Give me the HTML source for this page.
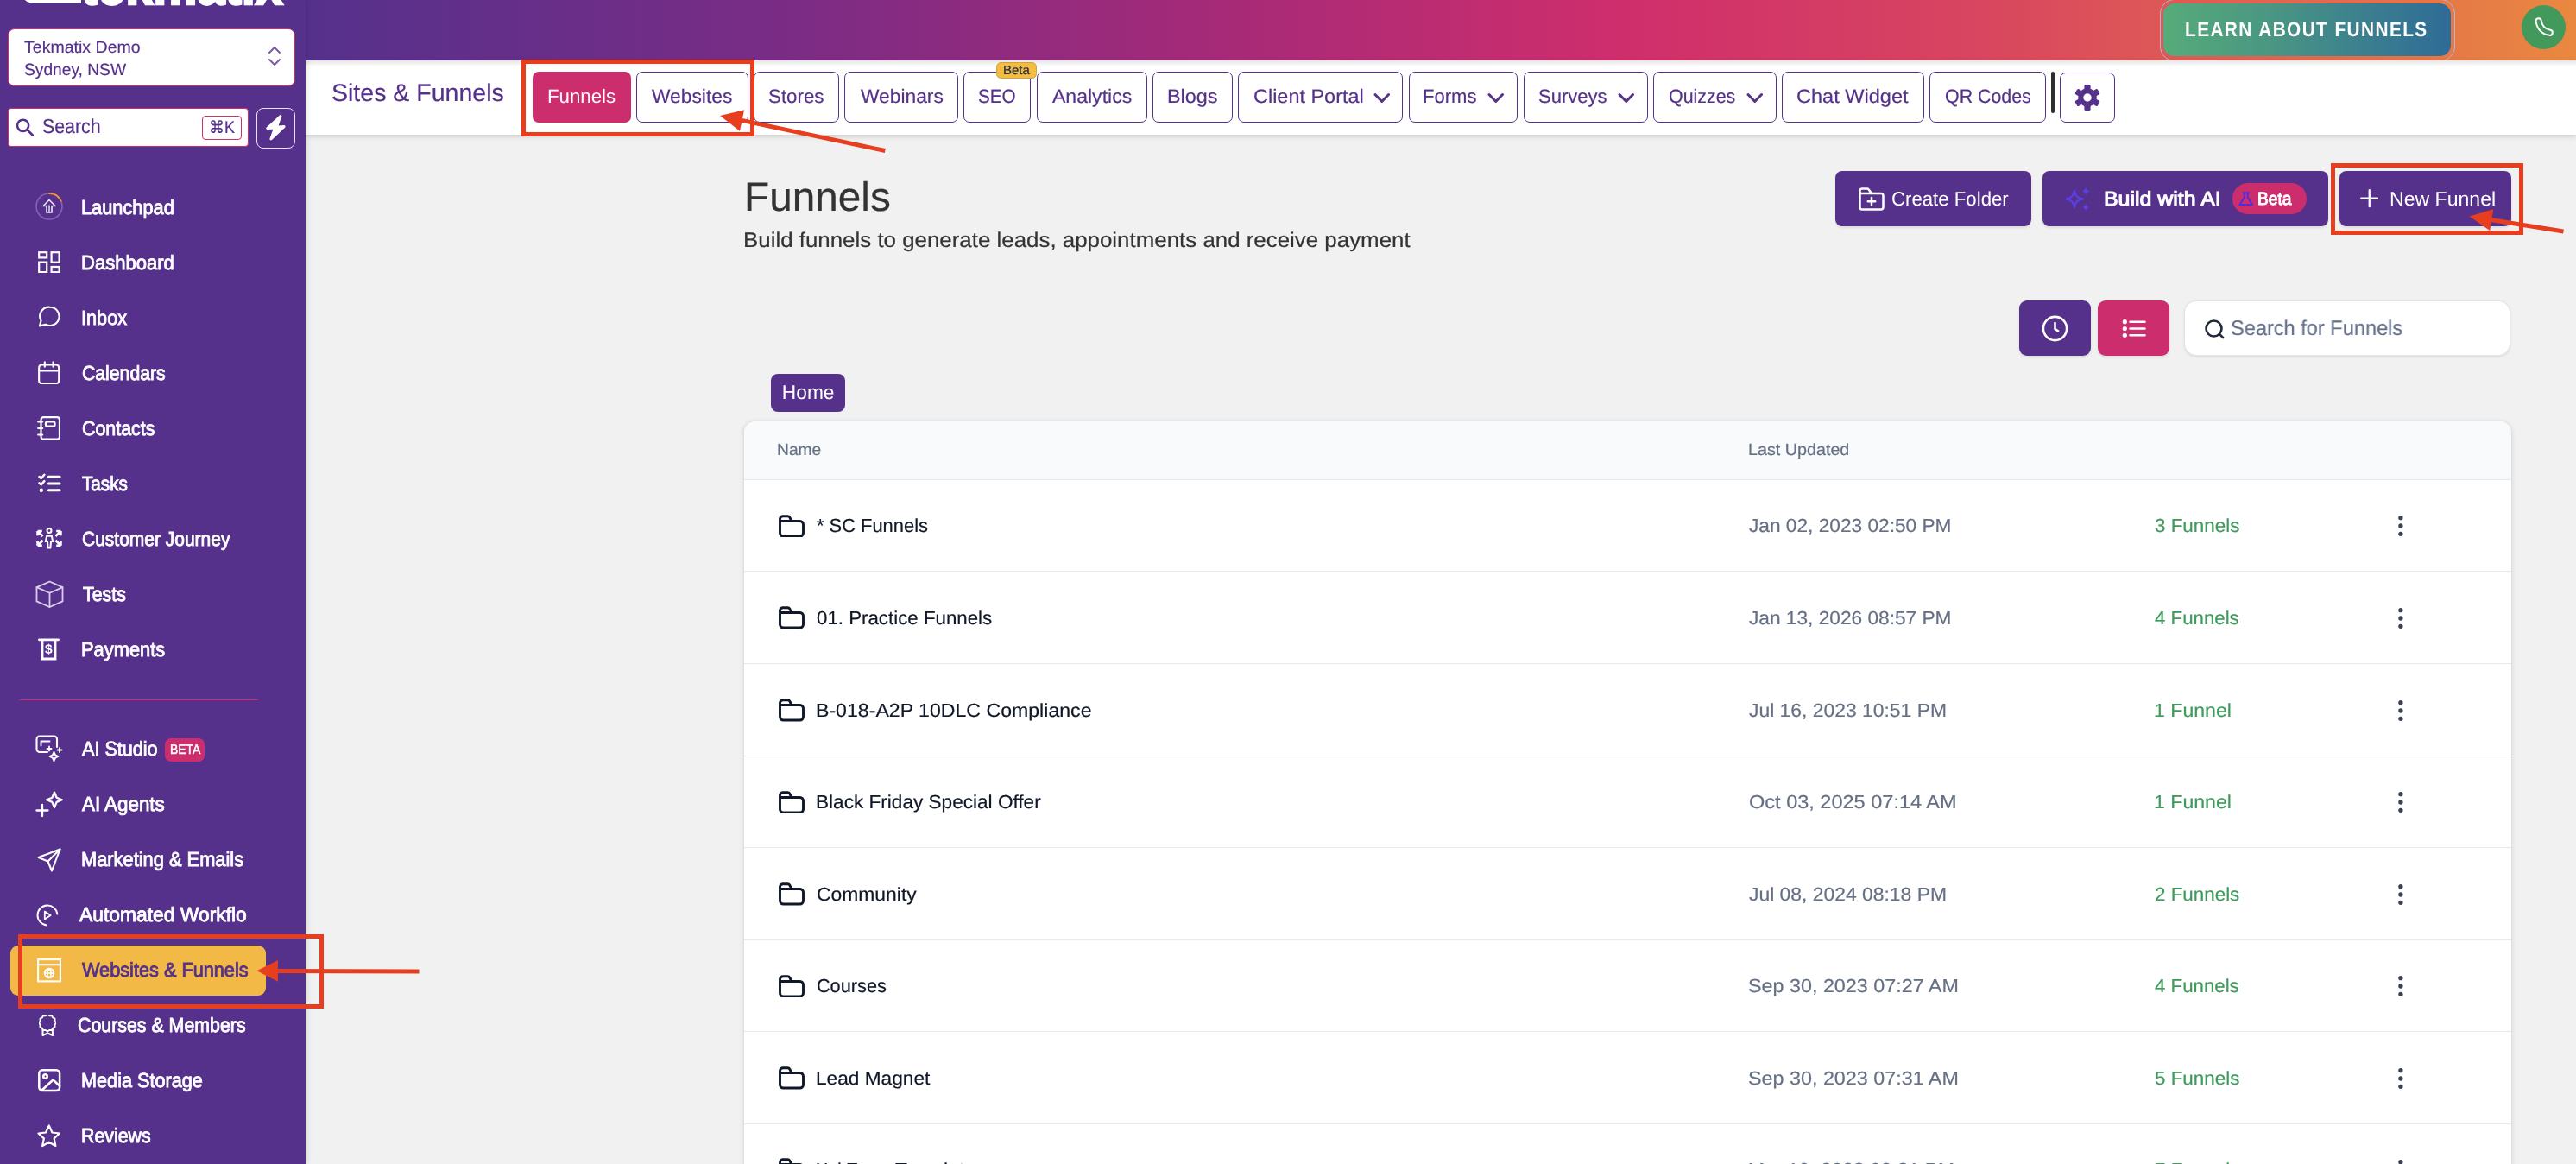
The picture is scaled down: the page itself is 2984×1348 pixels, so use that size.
<!DOCTYPE html>
<html lang="en">
<head>
<meta charset="utf-8">
<title>Funnels - Sites &amp; Funnels</title>
<style>
*{box-sizing:border-box;margin:0;padding:0}
html,body{width:2984px;height:1348px;overflow:hidden;background:#f1f1f1}
body{font-family:"Liberation Sans",Arial,sans-serif;-webkit-font-smoothing:antialiased;text-rendering:geometricPrecision}
#app{position:relative;width:2984px;height:1348px;overflow:hidden;will-change:transform}
.b{position:absolute;display:block}
.t{position:absolute;white-space:nowrap;transform-origin:0 50%;-webkit-text-stroke:.2px}

</style>
</head>
<body>
<div id="app">
<header>
<div class="b" style="left:354px;top:0px;width:2630px;height:70px;background:linear-gradient(90deg,#55318c 0%,#7a2c85 21%,#a52a78 40%,#cf2e6c 58%,#d8465f 74%,#e05d55 84%,#e98840 100%);"></div>
<div class="b" style="left:2501.5px;top:-1px;width:342.5px;height:72px;border-radius:17px;border:1.2px solid rgba(176,186,214,.95);"></div>
<div class="b" style="left:2505.8px;top:4px;width:333.4px;height:61.2px;border-radius:13px;background:linear-gradient(90deg,#56ab79 0%,#4a9683 38%,#3b7f8f 70%,#2f6b96 100%);"></div>
<div class="t" style="left:2531.40px;top:23px;font-size:23.5px;line-height:23.5px;color:#fff;font-weight:700;-webkit-text-stroke:0;letter-spacing:1.6px;transform:scaleX(0.8855);">LEARN ABOUT FUNNELS</div>
<div class="b" style="left:2921px;top:6px;width:51px;height:51px;background:#43995c;border-radius:26px;"></div>
<svg class="b" style="left:2921px;top:6px;" width="51" height="51" viewBox="0 0 51 51" fill="none" stroke="#fff" stroke-width="2" stroke-linecap="round" stroke-linejoin="round"><path d="M19.700 18.400Q21.400 29.900 32.700 31.800" stroke="#fff" stroke-width="8.200"/><path d="M19.700 18.400Q21.400 29.900 32.700 31.800" stroke="#43995c" stroke-width="4.200"/></svg>
</header>
<nav>
<div class="b" style="left:354px;top:70px;width:2630px;height:86px;background:#fff;box-shadow:0 2px 6px rgba(0,0,0,.16);"></div>
<div class="b" style="left:354px;top:70px;width:2630px;height:7px;background:linear-gradient(rgba(0,0,0,.10),rgba(0,0,0,0));"></div>
<div class="t" style="left:383.83px;top:93px;font-size:28.25px;line-height:28.25px;color:#55318c;transform:scaleX(1.0100);">Sites &amp; Funnels</div>
<div class="b" style="left:617px;top:83px;width:114px;height:59px;background:#cc2d6d;border-radius:7px;"></div>
<div class="t" style="left:633.97px;top:101px;font-size:22.25px;line-height:22.25px;color:#fff;-webkit-text-stroke:0;">Funnels</div>
<div class="b" style="left:737px;top:83px;width:129.75px;height:59px;background:#fff;border-radius:7px;border:1.5px solid #55318c;"></div>
<div class="t" style="left:755.46px;top:101px;font-size:22.25px;line-height:22.25px;color:#55318c;transform:scaleX(1.0243);">Websites</div>
<div class="b" style="left:873px;top:83px;width:98.75px;height:59px;background:#fff;border-radius:7px;border:1.5px solid #55318c;"></div>
<div class="t" style="left:889.96px;top:101px;font-size:22.25px;line-height:22.25px;color:#55318c;transform:scaleX(1.0034);">Stores</div>
<div class="b" style="left:978px;top:83px;width:131.75px;height:59px;background:#fff;border-radius:7px;border:1.5px solid #55318c;"></div>
<div class="t" style="left:996.71px;top:101px;font-size:22.25px;line-height:22.25px;color:#55318c;transform:scaleX(1.0239);">Webinars</div>
<div class="b" style="left:1116px;top:83px;width:77.75px;height:59px;background:#fff;border-radius:7px;border:1.5px solid #55318c;"></div>
<div class="t" style="left:1133.31px;top:101px;font-size:22.25px;line-height:22.25px;color:#55318c;transform:scaleX(0.9283);">SEO</div>
<div class="b" style="left:1201px;top:83px;width:127.75px;height:59px;background:#fff;border-radius:7px;border:1.5px solid #55318c;"></div>
<div class="t" style="left:1219.27px;top:101px;font-size:22.25px;line-height:22.25px;color:#55318c;transform:scaleX(1.0356);">Analytics</div>
<div class="b" style="left:1335px;top:83px;width:92.75px;height:59px;background:#fff;border-radius:7px;border:1.5px solid #55318c;"></div>
<div class="t" style="left:1351.88px;top:101px;font-size:22.25px;line-height:22.25px;color:#55318c;transform:scaleX(1.0512);">Blogs</div>
<div class="b" style="left:1434.25px;top:83px;width:190.5px;height:59px;background:#fff;border-radius:7px;border:1.5px solid #55318c;"></div>
<div class="t" style="left:1451.56px;top:101px;font-size:22.25px;line-height:22.25px;color:#55318c;transform:scaleX(1.0540);">Client Portal</div>
<svg class="b" style="left:1590.5px;top:107px;" width="19.5" height="13.5" viewBox="0 0 19.5 13.5" fill="none" stroke="#55318c" stroke-width="3" stroke-linecap="round" stroke-linejoin="round"><path d="M2 2.500l7.750 8 7.750-8"/></svg>
<div class="b" style="left:1632.25px;top:83px;width:125.5px;height:59px;background:#fff;border-radius:7px;border:1.5px solid #55318c;"></div>
<div class="t" style="left:1648.49px;top:101px;font-size:22.25px;line-height:22.25px;color:#55318c;transform:scaleX(0.9907);">Forms</div>
<svg class="b" style="left:1723.0px;top:107px;" width="19.5" height="13.5" viewBox="0 0 19.5 13.5" fill="none" stroke="#55318c" stroke-width="3" stroke-linecap="round" stroke-linejoin="round"><path d="M2 2.500l7.750 8 7.750-8"/></svg>
<div class="b" style="left:1765.25px;top:83px;width:143.5px;height:59px;background:#fff;border-radius:7px;border:1.5px solid #55318c;"></div>
<div class="t" style="left:1781.97px;top:101px;font-size:22.25px;line-height:22.25px;color:#55318c;transform:scaleX(0.9899);">Surveys</div>
<svg class="b" style="left:1874.0px;top:107px;" width="19.5" height="13.5" viewBox="0 0 19.5 13.5" fill="none" stroke="#55318c" stroke-width="3" stroke-linecap="round" stroke-linejoin="round"><path d="M2 2.500l7.750 8 7.750-8"/></svg>
<div class="b" style="left:1915.25px;top:83px;width:142.5px;height:59px;background:#fff;border-radius:7px;border:1.5px solid #55318c;"></div>
<div class="t" style="left:1933.00px;top:101px;font-size:22.25px;line-height:22.25px;color:#55318c;transform:scaleX(0.9612);">Quizzes</div>
<svg class="b" style="left:2022.5px;top:107px;" width="19.5" height="13.5" viewBox="0 0 19.5 13.5" fill="none" stroke="#55318c" stroke-width="3" stroke-linecap="round" stroke-linejoin="round"><path d="M2 2.500l7.750 8 7.750-8"/></svg>
<div class="b" style="left:2064.25px;top:83px;width:164.5px;height:59px;background:#fff;border-radius:7px;border:1.5px solid #55318c;"></div>
<div class="t" style="left:2081.30px;top:101px;font-size:22.25px;line-height:22.25px;color:#55318c;transform:scaleX(1.0584);">Chat Widget</div>
<div class="b" style="left:2235.25px;top:83px;width:134.5px;height:59px;background:#fff;border-radius:7px;border:1.5px solid #55318c;"></div>
<div class="t" style="left:2252.50px;top:101px;font-size:22.25px;line-height:22.25px;color:#55318c;transform:scaleX(0.9607);">QR Codes</div>
<div class="b" style="left:1154.25px;top:72px;width:46.5px;height:18.75px;background:#f4bc40;border-radius:5.5px;border:1px solid #cda43c;"></div>
<div class="t" style="left:1162.05px;top:75px;font-size:14.5px;line-height:14.5px;color:#1f2a44;transform:scaleX(1.0356);">Beta</div>
<div class="b" style="left:2376.2px;top:83px;width:4px;height:47.8px;background:#2e2e2e;border-radius:2px;"></div>
<div class="b" style="left:2386px;top:84px;width:64px;height:58px;background:#fff;border-radius:7px;border:1.5px solid #55318c;"></div>
<svg class="b" style="left:2403px;top:97.5px;" width="30" height="30" viewBox="0 0 30 30" fill="#55318c" stroke="none" stroke-width="0" stroke-linecap="round" stroke-linejoin="round"><g transform="translate(15 15)"><rect x="-3.6" y="-15" width="7.2" height="9" rx="1.6" transform="rotate(0)"/><rect x="-3.6" y="-15" width="7.2" height="9" rx="1.6" transform="rotate(60)"/><rect x="-3.6" y="-15" width="7.2" height="9" rx="1.6" transform="rotate(120)"/><rect x="-3.6" y="-15" width="7.2" height="9" rx="1.6" transform="rotate(180)"/><rect x="-3.6" y="-15" width="7.2" height="9" rx="1.6" transform="rotate(240)"/><rect x="-3.6" y="-15" width="7.2" height="9" rx="1.6" transform="rotate(300)"/><circle r="7.700" fill="none" stroke="#55318c" stroke-width="6"/></g></svg>
</nav>
<aside>
<div class="b" style="left:0px;top:0px;width:354px;height:1348px;background:#55318c;box-shadow:2px 0 6px rgba(0,0,0,.10);"></div>
<div class="t" style="left:94.21px;top:-49px;font-size:64px;line-height:64px;color:#fff;font-weight:700;-webkit-text-stroke:0;transform:scaleX(0.9007);-webkit-text-stroke:2.5px #fff;">tekmatix</div>
<svg class="b" style="left:28px;top:-0.8px;" width="70" height="6" viewBox="0 0 70 6" fill="#fff" stroke="none" stroke-width="0" stroke-linecap="round" stroke-linejoin="round"><path d="M0 0h66v5H14C7 5 2 3 0 0z"/></svg>
<div class="b" style="left:9px;top:33px;width:333px;height:66.5px;background:#fff;border-radius:8px;border:1.3px solid #cc2d6d;"></div>
<div class="t" style="left:28.34px;top:46px;font-size:19.25px;line-height:19.25px;color:#55318c;transform:scaleX(1.0156);">Tekmatix Demo</div>
<div class="t" style="left:27.60px;top:72px;font-size:19.25px;line-height:19.25px;color:#55318c;transform:scaleX(0.9966);">Sydney, NSW</div>
<svg class="b" style="left:309px;top:52px;" width="18" height="26" viewBox="0 0 16 26" fill="none" stroke="#7a5aa8" stroke-width="2" stroke-linecap="round" stroke-linejoin="round"><path d="M2 9l6-6 6 6M2 17l6 6 6-6"/></svg>
<div class="b" style="left:9px;top:125px;width:279px;height:44.5px;background:#fff;border-radius:4px;border:1.3px solid #cc2d6d;"></div>
<svg class="b" style="left:17px;top:135.5px;" width="24" height="24" viewBox="0 0 24 24" fill="none" stroke="#55318c" stroke-width="2.6" stroke-linecap="round" stroke-linejoin="round"><circle cx="9.6" cy="9.3" r="6.6"/><path d="M14.6 14.3L20.8 20.5"/></svg>
<div class="t" style="left:48.57px;top:135px;font-size:23px;line-height:23px;color:#55318c;transform:scaleX(0.9277);">Search</div>
<div class="b" style="left:234px;top:134px;width:46px;height:27.5px;background:#fff;border-radius:4px;border:1.5px solid #cc2d6d;"></div>
<div class="t" style="left:242.07px;top:139px;font-size:19.5px;line-height:19.5px;color:#55318c;transform:scaleX(0.9193);">⌘K</div>
<div class="b" style="left:297px;top:125px;width:45px;height:47px;background:#55318c;border-radius:8px;border:1.5px solid #e9e2f3;"></div>
<svg class="b" style="left:300px;top:125px;" width="40" height="46" viewBox="0 0 40 46" fill="#fff" stroke="#fff" stroke-width="3" stroke-linecap="round" stroke-linejoin="round"><path d="M24.900 9.600L9.700 23.500l8.800-.600-4.600 13 15.200-14.300-8.700.600z"/></svg>
<div class="t" style="left:93.94px;top:229px;font-size:23.25px;line-height:23.25px;color:#fff;-webkit-text-stroke:0;transform:scaleX(0.9369);-webkit-text-stroke:.85px;">Launchpad</div>
<div class="t" style="left:93.93px;top:293px;font-size:23.25px;line-height:23.25px;color:#fff;-webkit-text-stroke:0;transform:scaleX(0.9481);-webkit-text-stroke:.85px;">Dashboard</div>
<div class="t" style="left:93.69px;top:357px;font-size:23.25px;line-height:23.25px;color:#fff;-webkit-text-stroke:0;transform:scaleX(0.9335);-webkit-text-stroke:.85px;">Inbox</div>
<div class="t" style="left:94.56px;top:421px;font-size:23.25px;line-height:23.25px;color:#fff;-webkit-text-stroke:0;transform:scaleX(0.9122);-webkit-text-stroke:.85px;">Calendars</div>
<div class="t" style="left:94.55px;top:485px;font-size:23.25px;line-height:23.25px;color:#fff;-webkit-text-stroke:0;transform:scaleX(0.9207);-webkit-text-stroke:.85px;">Contacts</div>
<div class="t" style="left:95.23px;top:549px;font-size:23.25px;line-height:23.25px;color:#fff;-webkit-text-stroke:0;transform:scaleX(0.8907);-webkit-text-stroke:.85px;">Tasks</div>
<div class="t" style="left:94.57px;top:613px;font-size:23.25px;line-height:23.25px;color:#fff;-webkit-text-stroke:0;transform:scaleX(0.9023);-webkit-text-stroke:.85px;">Customer Journey</div>
<div class="t" style="left:96.13px;top:677px;font-size:23.25px;line-height:23.25px;color:#fff;-webkit-text-stroke:0;transform:scaleX(0.9177);-webkit-text-stroke:.85px;">Tests</div>
<div class="t" style="left:93.94px;top:741px;font-size:23.25px;line-height:23.25px;color:#fff;-webkit-text-stroke:0;transform:scaleX(0.9403);-webkit-text-stroke:.85px;">Payments</div>
<div class="b" style="left:22px;top:810px;width:277px;height:1.3px;background:#c62e6f;"></div>
<div class="b" style="left:12px;top:1094.5px;width:296px;height:58.5px;background:#f3b947;border-radius:9px;"></div>
<div class="t" style="left:95.22px;top:856px;font-size:23.25px;line-height:23.25px;color:#fff;-webkit-text-stroke:0;transform:scaleX(0.9285);-webkit-text-stroke:.85px;">AI Studio</div>
<div class="t" style="left:95.23px;top:920px;font-size:23.25px;line-height:23.25px;color:#fff;-webkit-text-stroke:0;transform:scaleX(0.9619);-webkit-text-stroke:.85px;">AI Agents</div>
<div class="t" style="left:93.64px;top:984px;font-size:23.25px;line-height:23.25px;color:#fff;-webkit-text-stroke:0;transform:scaleX(0.9392);-webkit-text-stroke:.85px;">Marketing &amp; Emails</div>
<div class="t" style="left:92.04px;top:1048px;font-size:23.25px;line-height:23.25px;color:#fff;-webkit-text-stroke:0;transform:scaleX(0.9824);-webkit-text-stroke:.85px;">Automated Workflo</div>
<div class="t" style="left:95.08px;top:1112px;font-size:23.25px;line-height:23.25px;color:#55318c;transform:scaleX(0.9335);-webkit-text-stroke:.85px;">Websites &amp; Funnels</div>
<div class="t" style="left:90.06px;top:1176px;font-size:23.25px;line-height:23.25px;color:#fff;-webkit-text-stroke:0;transform:scaleX(0.9184);-webkit-text-stroke:.85px;">Courses &amp; Members</div>
<div class="t" style="left:94.05px;top:1240px;font-size:23.25px;line-height:23.25px;color:#fff;-webkit-text-stroke:0;transform:scaleX(0.9318);-webkit-text-stroke:.85px;">Media Storage</div>
<div class="t" style="left:94.07px;top:1304px;font-size:23.25px;line-height:23.25px;color:#fff;-webkit-text-stroke:0;transform:scaleX(0.9181);-webkit-text-stroke:.85px;">Reviews</div>
<div class="b" style="left:191px;top:855px;width:46px;height:27px;background:#cc2d6d;border-radius:7px;"></div>
<div class="t" style="left:196.80px;top:861px;font-size:15.5px;line-height:15.5px;color:#fff;-webkit-text-stroke:0;transform:scaleX(0.8979);-webkit-text-stroke:.5px #fff;">BETA</div>
<svg class="b" style="left:41px;top:223px;" width="32" height="32" viewBox="0 0 32 32" fill="none" stroke="#fff" stroke-width="1.6" stroke-linecap="round" stroke-linejoin="round"><circle cx="16" cy="16" r="15" stroke="#8363b5" stroke-width="1.6"/><path d="M16 1a15 15 0 0 1 13.6 8.7" stroke="#f0923c" stroke-width="1.8"/><path d="M16 8.5l-7 7h4v7.5h6V15.5h4z" stroke="#e6dcf3" stroke-width="1.7"/><path d="M16 15v8" stroke="#e6dcf3" stroke-width="1.5"/></svg>
<svg class="b" style="left:44px;top:290.5px;stroke-linejoin:miter;" width="26" height="25.5" viewBox="0 0 26 25.5" fill="none" stroke="#fff" stroke-width="2.2" stroke-linecap="round" stroke-linejoin="round"><rect x="1.2" y="1.2" width="9" height="6.2"/><rect x="15.6" y="1.2" width="9" height="11.5"/><rect x="1.2" y="12.6" width="9" height="11.5"/><rect x="15.6" y="18" width="9" height="6.2"/></svg>
<svg class="b" style="left:43.8px;top:354px;" width="26" height="25.6" viewBox="0 0 27 26" fill="none" stroke="#fff" stroke-width="2.2" stroke-linecap="round" stroke-linejoin="round"><path d="M14.5 1.5a11 11 0 1 1-5.2 20.7L2 24l1.7-6.2A11 11 0 0 1 14.5 1.5z"/></svg>
<svg class="b" style="left:44px;top:417.7px;" width="25.4" height="27.8" viewBox="0 0 26 28" fill="none" stroke="#fff" stroke-width="2.2" stroke-linecap="round" stroke-linejoin="round"><rect x="1.2" y="4.2" width="23.6" height="22.5" rx="3.5"/><path d="M1.5 11.5h23M8 1.2v5.5M18 1.2v5.5"/></svg>
<svg class="b" style="left:42.5px;top:481.5px;" width="27.5" height="28" viewBox="0 0 27.5 28" fill="none" stroke="#fff" stroke-width="2.2" stroke-linecap="round" stroke-linejoin="round"><rect x="4.5" y="1.2" width="21.5" height="25.5" rx="3"/><rect x="10" y="6.5" width="10.5" height="5" rx="1.5"/><path d="M1.2 6.5h5M1.2 14h5M1.2 21.5h5"/></svg>
<svg class="b" style="left:44px;top:547.5px;" width="27" height="23" viewBox="0 0 27 23" fill="none" stroke="#fff" stroke-width="3" stroke-linecap="round" stroke-linejoin="round"><path d="M1.500 4l2.200 2 3.600-4.200M1.500 11.300l2.200 2 3.600-4.200" stroke-width="2.500"/><circle cx="3.800" cy="19.700" r="2.200" fill="#fff" stroke="none"/><path d="M12.300 4.300h12.800M12.300 11.900h12.800M12.300 19.700h12.800"/></svg>
<svg class="b" style="left:42px;top:610.5px;stroke-linejoin:miter;stroke-linecap:butt;" width="30" height="25" viewBox="0 0 30 25" fill="none" stroke="#fff" stroke-width="2.7" stroke-linecap="round" stroke-linejoin="round"><circle cx="15" cy="3.6" r="2.5" stroke-width="2"/><path d="M12.1 9.8h5.8l1.2 6.2h-2.1l-.6 7.4h-2.8l-.6-7.4h-2.1z" stroke-width="2"/><path d="M1.6 4h5.2M1.6 4v5.2M2 4.400l5.600 5.600M28.400 4h-5.200M28.400 4v5.200M28 4.400l-5.600 5.600M1.600 20.800h5.200M1.600 20.800v-5.200M2 20.400l5.600-5.600M28.400 20.800h-5.200M28.400 20.800v-5.200M28 20.400l-5.600-5.600"/></svg>
<svg class="b" style="left:40.5px;top:671.5px;" width="33" height="32.5" viewBox="0 0 33 32.5" fill="none" stroke="#dacfea" stroke-width="1.8" stroke-linecap="round" stroke-linejoin="round"><path d="M16.5 1.5l15 6.6v16.3l-15 6.6-15-6.6V8.1z"/><path d="M1.5 8.1l15 6.6 15-6.6M16.5 14.7V31"/></svg>
<svg class="b" style="left:44px;top:738.5px;stroke-linejoin:miter;" width="25" height="26" viewBox="0 0 25 26" fill="none" stroke="#fff" stroke-width="2.8" stroke-linecap="round" stroke-linejoin="round"><path d="M1.400 1.800h22.200M5 1.800v22.200h15v-22.200"/></svg>
<div class="t" style="left:51.90px;top:745px;font-size:15.5px;line-height:15.5px;color:#fff;font-weight:700;-webkit-text-stroke:0;">$</div>
<svg class="b" style="left:41px;top:851px;" width="32.5" height="32" viewBox="0 0 32.5 32" fill="none" stroke="#fff" stroke-width="2.1" stroke-linecap="round" stroke-linejoin="round"><path d="M25 14V5a3.5 3.5 0 0 0-3.5-3.500H5A3.500 3.500 0 0 0 1.500 5v11.500A3.500 3.500 0 0 0 5 20h9"/><path d="M6.500 7.500h10M6.500 7.500v5" stroke-width="1.9"/><path d="M16 13.500v5M13.500 16h5M28 15v5M25.500 17.500h5" stroke-width="1.800"/><path d="M21.500 20l1.600 3.400 3.400 1.600-3.400 1.600-1.600 3.400-1.600-3.400-3.400-1.600 3.400-1.600z" stroke-width="1.900"/></svg>
<svg class="b" style="left:41px;top:916px;" width="32" height="30.5" viewBox="0 0 32 30.5" fill="none" stroke="#fff" stroke-width="2.3" stroke-linecap="round" stroke-linejoin="round"><path d="M22 1.500l2.600 6.200 6.200 2.600-6.200 2.600-2.600 6.200-2.600-6.200-6.200-2.600 6.200-2.600z"/><path d="M8 16v13M1.500 22.500h13"/></svg>
<svg class="b" style="left:43px;top:981.5px;" width="28" height="28" viewBox="0 0 28 28" fill="none" stroke="#fff" stroke-width="2.1" stroke-linecap="round" stroke-linejoin="round"><path d="M26.500 1.500L1.500 11l11 4.500L17 26.500z"/><path d="M26.500 1.500L12.500 15.500"/></svg>
<svg class="b" style="left:42px;top:1046.5px;" width="26" height="26" viewBox="0 0 26 26" fill="none" stroke="#fff" stroke-width="1.9" stroke-linecap="round" stroke-linejoin="round"><path d="M24.400 11.600A11.500 11.500 0 1 0 12 24.460"/><path d="M9.800 8.600v8.800l6.800-4.400z" stroke-width="1.800"/></svg>
<svg class="b" style="left:43px;top:1110px;stroke-linejoin:miter;" width="28" height="27.5" viewBox="0 0 28 27.5" fill="none" stroke="#fff" stroke-width="2.1" stroke-linecap="round" stroke-linejoin="round"><rect x="1.100" y="1.100" width="25.800" height="25.300"/><path d="M1.100 7.200h25.800"/><circle cx="14" cy="17" r="5.300" stroke-width="1.800"/><path d="M8.700 17h10.600M14 11.700c-3 3-3 7.600 0 10.600M14 11.700c3 3 3 7.600 0 10.600" stroke-width="1.500"/></svg>
<svg class="b" style="left:44.5px;top:1174.5px;" width="20.5" height="25" viewBox="0 0 20.5 25" fill="none" stroke="#fff" stroke-width="2" stroke-linecap="round" stroke-linejoin="round"><path d="M10.200 1.200l2.300 1.500 2.700-.1 1.300 2.400 2.400 1.300-.1 2.700 1.500 2.300-1.500 2.300.1 2.700-2.400 1.300-1.300 2.400-2.700-.1-2.300 1.500-2.300-1.500-2.700.1-1.300-2.400-2.400-1.300.1-2.700L.200 11.300l1.500-2.300-.1-2.700 2.400-1.300 1.300-2.400 2.700.1z" transform="translate(0 -1.500) scale(.98)"/><path d="M4.500 17.500v6.500l5.700-2.500 5.700 2.500v-6.500"/></svg>
<svg class="b" style="left:44px;top:1238px;" width="26.5" height="26.5" viewBox="0 0 26.5 26.5" fill="none" stroke="#fff" stroke-width="2.5" stroke-linecap="round" stroke-linejoin="round"><rect x="1.300" y="1.300" width="23.800" height="23.800" rx="4"/><circle cx="8.500" cy="8.500" r="2.300"/><path d="M4.500 24.500L17.500 12.500l7.500 7"/></svg>
<svg class="b" style="left:43px;top:1301.5px;" width="27.5" height="27" viewBox="0 0 27.5 27" fill="none" stroke="#fff" stroke-width="2.2" stroke-linecap="round" stroke-linejoin="round"><path d="M13.750 1.500l3.700 8 8.500 1-6.300 5.900 1.700 8.600-7.600-4.300-7.600 4.300 1.700-8.600-6.300-5.900 8.500-1z"/></svg>
</aside>
<main>
<div class="t" style="left:861.76px;top:205px;font-size:47.25px;line-height:47.25px;color:#333;transform:scaleX(1.0100);">Funnels</div>
<div class="t" style="left:861.17px;top:267px;font-size:24.25px;line-height:24.25px;color:#333;transform:scaleX(1.0673);">Build funnels to generate leads, appointments and receive payment</div>
<div class="b" style="left:2126px;top:198px;width:227px;height:64px;background:#55318c;border-radius:8px;box-shadow:0 1.5px 3px rgba(0,0,0,.09);"></div>
<svg class="b" style="left:2153px;top:216.5px;" width="30" height="27" viewBox="0 0 30 27" fill="none" stroke="#fff" stroke-width="2.5" stroke-linecap="round" stroke-linejoin="round"><path d="M1.500 5.500v17.500a2.500 2.500 0 0 0 2.500 2.500h22a2.500 2.500 0 0 0 2.500-2.500V9.500a2.500 2.500 0 0 0-2.500-2.500H15l-3.300-4.600a2 2 0 0 0-1.600-.9H4a2.500 2.500 0 0 0-2.500 2.500zM1.500 7h13.500"/><path d="M15 12v8.500M10.750 16.250h8.500"/></svg>
<div class="t" style="left:2190.85px;top:219px;font-size:22.75px;line-height:22.75px;color:#fff;-webkit-text-stroke:0;transform:scaleX(0.9759);">Create Folder</div>
<div class="b" style="left:2366px;top:198px;width:331.25px;height:64px;background:#55318c;border-radius:8px;box-shadow:0 1.5px 3px rgba(0,0,0,.09);"></div>
<svg class="b" style="left:2393px;top:215.5px;" width="29" height="29" viewBox="0 0 29 29" fill="none" stroke="none" stroke-width="0" stroke-linecap="round" stroke-linejoin="round"><path d="M10 5.200c1 5.800 3.400 8.200 9.300 9.300-5.900 1.100-8.300 3.500-9.300 9.300-1-5.800-3.400-8.200-9.300-9.300 5.900-1.100 8.300-3.500 9.300-9.300z" fill="none" stroke="#5b3fe8" stroke-width="2.400"/><path d="M23.200 .300c.6 3.300 1.700 4.400 5 5-3.300.6-4.400 1.700-5 5-.6-3.300-1.700-4.400-5-5 3.300-.6 4.400-1.700 5-5zM23.200 19c.6 3.300 1.700 4.400 5 5-3.300.6-4.400 1.700-5 5-.6-3.300-1.700-4.400-5-5 3.300-.6 4.400-1.700 5-5z" fill="#5b3fe8" stroke="none"/></svg>
<div class="t" style="left:2436.82px;top:219px;font-size:23.25px;line-height:23.25px;color:#fff;-webkit-text-stroke:0;transform:scaleX(1.0712);-webkit-text-stroke:1px;">Build with AI</div>
<div class="b" style="left:2586.25px;top:212px;width:86px;height:36px;background:#cc2d6d;border-radius:18px;"></div>
<svg class="b" style="left:2592.5px;top:222px;" width="17.5" height="16.5" viewBox="0 0 17.5 16.5" fill="none" stroke="#4b2fe0" stroke-width="2" stroke-linecap="round" stroke-linejoin="round"><path d="M5.500 1.200h6.500M6.800 1.200v5.300L1.500 15h14.500L10.700 6.500V1.200"/></svg>
<div class="t" style="left:2614.73px;top:221px;font-size:20.75px;line-height:20.75px;color:#fff;-webkit-text-stroke:0;transform:scaleX(0.9233);-webkit-text-stroke:1px;">Beta</div>
<div class="b" style="left:2710px;top:198px;width:199.25px;height:64px;background:#55318c;border-radius:8px;box-shadow:0 1.5px 3px rgba(0,0,0,.09);"></div>
<svg class="b" style="left:2733.8px;top:219.3px;" width="21.5" height="21.5" viewBox="0 0 21.5 21.5" fill="none" stroke="#fff" stroke-width="2.3" stroke-linecap="round" stroke-linejoin="round"><path d="M10.750 1.200v19M1.200 10.750h19"/></svg>
<div class="t" style="left:2767.77px;top:219px;font-size:22.75px;line-height:22.75px;color:#fff;-webkit-text-stroke:0;transform:scaleX(1.0139);">New Funnel</div>
<div class="b" style="left:2339px;top:348px;width:83px;height:64px;background:#55318c;border-radius:9px;box-shadow:0 1.5px 3px rgba(0,0,0,.09);"></div>
<svg class="b" style="left:2365px;top:364.5px;" width="31" height="31" viewBox="0 0 31 31" fill="none" stroke="#fff" stroke-width="2.6" stroke-linecap="round" stroke-linejoin="round"><circle cx="15.500" cy="15.500" r="13.600"/><path d="M15.500 9v7l3.600 2.400"/></svg>
<div class="b" style="left:2430px;top:348px;width:83px;height:64px;background:#cc2d6d;border-radius:9px;box-shadow:0 1.5px 3px rgba(0,0,0,.09);"></div>
<svg class="b" style="left:2458px;top:368.5px;" width="28" height="23" viewBox="0 0 28 23" fill="none" stroke="#fff" stroke-width="2.6" stroke-linecap="round" stroke-linejoin="round"><circle cx="3.300" cy="3.700" r="2.600" fill="#fff" stroke="none"/><circle cx="3.300" cy="11.500" r="2.600" fill="#fff" stroke="none"/><circle cx="3.300" cy="19.300" r="2.600" fill="#fff" stroke="none"/><path d="M9.500 3.700h17M9.500 11.500h17M9.500 19.300h17"/></svg>
<div class="b" style="left:2529.6px;top:348.4px;width:378.8px;height:63.2px;background:#fff;border-radius:14px;border:1px solid #e2e4ea;box-shadow:0 1px 3px rgba(16,24,40,.10);"></div>
<svg class="b" style="left:2553.5px;top:369.5px;" width="23" height="23" viewBox="0 0 23 23" fill="none" stroke="#1f2a3d" stroke-width="2.6" stroke-linecap="round" stroke-linejoin="round"><circle cx="10.500" cy="10.500" r="9"/><path d="M17.200 17.200l4 4"/></svg>
<div class="t" style="left:2583.99px;top:369px;font-size:24.25px;line-height:24.25px;color:#64708a;transform:scaleX(0.9719);">Search for Funnels</div>
<div class="b" style="left:893px;top:433px;width:86px;height:44px;background:#55318c;border-radius:8px;"></div>
<div class="t" style="left:905.80px;top:443px;font-size:22.75px;line-height:22.75px;color:#fff;-webkit-text-stroke:0;">Home</div>
<div class="b" style="left:862px;top:488px;width:2046.5px;height:900px;background:#fff;border-radius:13px;box-shadow:0 1px 6px rgba(16,24,40,.14),0 0 2px rgba(16,24,40,.10);overflow:hidden"><div class="b" style="left:0;top:0;width:100%;height:67px;background:#f9fafb"></div></div>
<div class="t" style="left:900.46px;top:512px;font-size:19px;line-height:19px;color:#667085;transform:scaleX(1.0121);">Name</div>
<div class="t" style="left:2025.17px;top:512px;font-size:19px;line-height:19px;color:#667085;transform:scaleX(1.0380);">Last Updated</div>
<div class="b" style="left:862px;top:555px;width:2046.5px;height:1px;background:#e7e9ee;"></div>
<svg class="b" style="left:902px;top:595.7px;" width="30" height="26.5" viewBox="0 0 30 26.5" fill="none" stroke="#101828" stroke-width="2.9" stroke-linecap="round" stroke-linejoin="round"><path d="M1.500 5.200v16a3.800 3.800 0 0 0 3.800 3.800h19.400a3.800 3.800 0 0 0 3.800-3.800V11.300a3.800 3.800 0 0 0-3.800-3.800H15l-2.200-4.400a2.600 2.600 0 0 0-2.300-1.400H5a3.500 3.500 0 0 0-3.500 3.500zM1.500 7.500h13.500"/></svg>
<div class="t" style="left:946.38px;top:598px;font-size:21.75px;line-height:21.75px;color:#101828;transform:scaleX(1.0062);">* SC Funnels</div>
<div class="t" style="left:2026.20px;top:598px;font-size:21.75px;line-height:21.75px;color:#667085;transform:scaleX(1.0426);">Jan 02, 2023 02:50 PM</div>
<div class="t" style="left:2495.58px;top:598px;font-size:21.75px;line-height:21.75px;color:#3f9b5c;transform:scaleX(1.0300);">3 Funnels</div>
<svg class="b" style="left:2775px;top:594.2px;" width="12" height="30" viewBox="0 0 12 30" fill="#3a4153" stroke="none" stroke-width="0" stroke-linecap="round" stroke-linejoin="round"><circle cx="5.9" cy="5.650" r="2.650"/><circle cx="5.9" cy="15" r="2.650"/><circle cx="5.9" cy="24.350" r="2.650"/></svg>
<div class="b" style="left:862px;top:661px;width:2046.5px;height:1px;background:#e7e9ee;"></div>
<svg class="b" style="left:902px;top:702.2px;" width="30" height="26.5" viewBox="0 0 30 26.5" fill="none" stroke="#101828" stroke-width="2.9" stroke-linecap="round" stroke-linejoin="round"><path d="M1.500 5.200v16a3.800 3.800 0 0 0 3.800 3.800h19.400a3.800 3.800 0 0 0 3.800-3.800V11.300a3.800 3.800 0 0 0-3.800-3.800H15l-2.200-4.400a2.600 2.600 0 0 0-2.300-1.400H5a3.500 3.500 0 0 0-3.500 3.500zM1.500 7.500h13.500"/></svg>
<div class="t" style="left:946.03px;top:705px;font-size:21.75px;line-height:21.75px;color:#101828;transform:scaleX(1.0248);">01. Practice Funnels</div>
<div class="t" style="left:2026.20px;top:705px;font-size:21.75px;line-height:21.75px;color:#667085;transform:scaleX(1.0426);">Jan 13, 2026 08:57 PM</div>
<div class="t" style="left:2496.26px;top:705px;font-size:21.75px;line-height:21.75px;color:#3f9b5c;transform:scaleX(1.0229);">4 Funnels</div>
<svg class="b" style="left:2775px;top:700.7px;" width="12" height="30" viewBox="0 0 12 30" fill="#3a4153" stroke="none" stroke-width="0" stroke-linecap="round" stroke-linejoin="round"><circle cx="5.9" cy="5.650" r="2.650"/><circle cx="5.9" cy="15" r="2.650"/><circle cx="5.9" cy="24.350" r="2.650"/></svg>
<div class="b" style="left:862px;top:768px;width:2046.5px;height:1px;background:#e7e9ee;"></div>
<svg class="b" style="left:902px;top:809.2px;" width="30" height="26.5" viewBox="0 0 30 26.5" fill="none" stroke="#101828" stroke-width="2.9" stroke-linecap="round" stroke-linejoin="round"><path d="M1.500 5.200v16a3.800 3.800 0 0 0 3.800 3.800h19.400a3.800 3.800 0 0 0 3.800-3.800V11.300a3.800 3.800 0 0 0-3.800-3.800H15l-2.200-4.400a2.600 2.600 0 0 0-2.300-1.400H5a3.500 3.500 0 0 0-3.500 3.500zM1.500 7.500h13.500"/></svg>
<div class="t" style="left:945.16px;top:812px;font-size:21.75px;line-height:21.75px;color:#101828;transform:scaleX(1.0628);">B-018-A2P 10DLC Compliance</div>
<div class="t" style="left:2026.19px;top:812px;font-size:21.75px;line-height:21.75px;color:#667085;transform:scaleX(1.0519);">Jul 16, 2023 10:51 PM</div>
<div class="t" style="left:2495.04px;top:812px;font-size:21.75px;line-height:21.75px;color:#3f9b5c;transform:scaleX(1.0622);">1 Funnel</div>
<svg class="b" style="left:2775px;top:807.7px;" width="12" height="30" viewBox="0 0 12 30" fill="#3a4153" stroke="none" stroke-width="0" stroke-linecap="round" stroke-linejoin="round"><circle cx="5.9" cy="5.650" r="2.650"/><circle cx="5.9" cy="15" r="2.650"/><circle cx="5.9" cy="24.350" r="2.650"/></svg>
<div class="b" style="left:862px;top:875px;width:2046.5px;height:1px;background:#e7e9ee;"></div>
<svg class="b" style="left:902px;top:915.7px;" width="30" height="26.5" viewBox="0 0 30 26.5" fill="none" stroke="#101828" stroke-width="2.9" stroke-linecap="round" stroke-linejoin="round"><path d="M1.500 5.200v16a3.800 3.800 0 0 0 3.800 3.800h19.400a3.800 3.800 0 0 0 3.800-3.800V11.300a3.800 3.800 0 0 0-3.800-3.800H15l-2.200-4.400a2.600 2.600 0 0 0-2.300-1.400H5a3.500 3.500 0 0 0-3.500 3.500zM1.500 7.500h13.500"/></svg>
<div class="t" style="left:945.20px;top:918px;font-size:21.75px;line-height:21.75px;color:#101828;transform:scaleX(1.0385);">Black Friday Special Offer</div>
<div class="t" style="left:2025.63px;top:918px;font-size:21.75px;line-height:21.75px;color:#667085;transform:scaleX(1.0816);">Oct 03, 2025 07:14 AM</div>
<div class="t" style="left:2495.04px;top:918px;font-size:21.75px;line-height:21.75px;color:#3f9b5c;transform:scaleX(1.0622);">1 Funnel</div>
<svg class="b" style="left:2775px;top:914.2px;" width="12" height="30" viewBox="0 0 12 30" fill="#3a4153" stroke="none" stroke-width="0" stroke-linecap="round" stroke-linejoin="round"><circle cx="5.9" cy="5.650" r="2.650"/><circle cx="5.9" cy="15" r="2.650"/><circle cx="5.9" cy="24.350" r="2.650"/></svg>
<div class="b" style="left:862px;top:981px;width:2046.5px;height:1px;background:#e7e9ee;"></div>
<svg class="b" style="left:902px;top:1022.1999999999999px;" width="30" height="26.5" viewBox="0 0 30 26.5" fill="none" stroke="#101828" stroke-width="2.9" stroke-linecap="round" stroke-linejoin="round"><path d="M1.500 5.200v16a3.800 3.800 0 0 0 3.800 3.800h19.400a3.800 3.800 0 0 0 3.800-3.800V11.300a3.800 3.800 0 0 0-3.800-3.800H15l-2.200-4.400a2.600 2.600 0 0 0-2.300-1.400H5a3.500 3.500 0 0 0-3.500 3.500zM1.500 7.500h13.500"/></svg>
<div class="t" style="left:945.83px;top:1025px;font-size:21.75px;line-height:21.75px;color:#101828;transform:scaleX(1.0519);">Community</div>
<div class="t" style="left:2026.19px;top:1025px;font-size:21.75px;line-height:21.75px;color:#667085;transform:scaleX(1.0519);">Jul 08, 2024 08:18 PM</div>
<div class="t" style="left:2495.66px;top:1025px;font-size:21.75px;line-height:21.75px;color:#3f9b5c;transform:scaleX(1.0293);">2 Funnels</div>
<svg class="b" style="left:2775px;top:1020.6999999999999px;" width="12" height="30" viewBox="0 0 12 30" fill="#3a4153" stroke="none" stroke-width="0" stroke-linecap="round" stroke-linejoin="round"><circle cx="5.9" cy="5.650" r="2.650"/><circle cx="5.9" cy="15" r="2.650"/><circle cx="5.9" cy="24.350" r="2.650"/></svg>
<div class="b" style="left:862px;top:1088px;width:2046.5px;height:1px;background:#e7e9ee;"></div>
<svg class="b" style="left:902px;top:1128.6999999999998px;" width="30" height="26.5" viewBox="0 0 30 26.5" fill="none" stroke="#101828" stroke-width="2.9" stroke-linecap="round" stroke-linejoin="round"><path d="M1.500 5.200v16a3.800 3.800 0 0 0 3.800 3.800h19.400a3.800 3.800 0 0 0 3.800-3.800V11.300a3.800 3.800 0 0 0-3.800-3.800H15l-2.200-4.400a2.600 2.600 0 0 0-2.300-1.400H5a3.500 3.500 0 0 0-3.500 3.500zM1.500 7.500h13.500"/></svg>
<div class="t" style="left:945.89px;top:1131px;font-size:21.75px;line-height:21.75px;color:#101828;">Courses</div>
<div class="t" style="left:2025.28px;top:1131px;font-size:21.75px;line-height:21.75px;color:#667085;transform:scaleX(1.0725);">Sep 30, 2023 07:27 AM</div>
<div class="t" style="left:2496.26px;top:1131px;font-size:21.75px;line-height:21.75px;color:#3f9b5c;transform:scaleX(1.0229);">4 Funnels</div>
<svg class="b" style="left:2775px;top:1127.1999999999998px;" width="12" height="30" viewBox="0 0 12 30" fill="#3a4153" stroke="none" stroke-width="0" stroke-linecap="round" stroke-linejoin="round"><circle cx="5.9" cy="5.650" r="2.650"/><circle cx="5.9" cy="15" r="2.650"/><circle cx="5.9" cy="24.350" r="2.650"/></svg>
<div class="b" style="left:862px;top:1194px;width:2046.5px;height:1px;background:#e7e9ee;"></div>
<svg class="b" style="left:902px;top:1235.1999999999998px;" width="30" height="26.5" viewBox="0 0 30 26.5" fill="none" stroke="#101828" stroke-width="2.9" stroke-linecap="round" stroke-linejoin="round"><path d="M1.500 5.200v16a3.800 3.800 0 0 0 3.800 3.800h19.400a3.800 3.800 0 0 0 3.800-3.800V11.300a3.800 3.800 0 0 0-3.800-3.800H15l-2.200-4.400a2.600 2.600 0 0 0-2.300-1.400H5a3.500 3.500 0 0 0-3.500 3.500zM1.500 7.500h13.500"/></svg>
<div class="t" style="left:945.19px;top:1238px;font-size:21.75px;line-height:21.75px;color:#101828;transform:scaleX(1.0424);">Lead Magnet</div>
<div class="t" style="left:2025.28px;top:1238px;font-size:21.75px;line-height:21.75px;color:#667085;transform:scaleX(1.0725);">Sep 30, 2023 07:31 AM</div>
<div class="t" style="left:2495.60px;top:1238px;font-size:21.75px;line-height:21.75px;color:#3f9b5c;transform:scaleX(1.0299);">5 Funnels</div>
<svg class="b" style="left:2775px;top:1233.6999999999998px;" width="12" height="30" viewBox="0 0 12 30" fill="#3a4153" stroke="none" stroke-width="0" stroke-linecap="round" stroke-linejoin="round"><circle cx="5.9" cy="5.650" r="2.650"/><circle cx="5.9" cy="15" r="2.650"/><circle cx="5.9" cy="24.350" r="2.650"/></svg>
<div class="b" style="left:862px;top:1301px;width:2046.5px;height:1px;background:#e7e9ee;"></div>
<svg class="b" style="left:902px;top:1341.1999999999998px;" width="30" height="26.5" viewBox="0 0 30 26.5" fill="none" stroke="#101828" stroke-width="2.9" stroke-linecap="round" stroke-linejoin="round"><path d="M1.500 5.200v16a3.800 3.800 0 0 0 3.800 3.800h19.400a3.800 3.800 0 0 0 3.800-3.800V11.300a3.800 3.800 0 0 0-3.800-3.800H15l-2.200-4.400a2.600 2.600 0 0 0-2.300-1.400H5a3.500 3.500 0 0 0-3.500 3.500zM1.500 7.500h13.500"/></svg>
<div class="t" style="left:945.44px;top:1344px;font-size:21.75px;line-height:21.75px;color:#101828;transform:scaleX(0.9064);">HubTag</div>
<div class="t" style="left:1036.58px;top:1344px;font-size:21.75px;line-height:21.75px;color:#101828;transform:scaleX(1.0534);">Template</div>
<div class="t" style="left:2024.93px;top:1344px;font-size:21.75px;line-height:21.75px;color:#667085;transform:scaleX(1.0519);">Mar 10, 2023 09:31 PM</div>
<div class="t" style="left:2495.64px;top:1344px;font-size:21.75px;line-height:21.75px;color:#3f9b5c;transform:scaleX(1.0295);">7 Funnels</div>
<svg class="b" style="left:2775px;top:1339.6999999999998px;" width="12" height="30" viewBox="0 0 12 30" fill="#3a4153" stroke="none" stroke-width="0" stroke-linecap="round" stroke-linejoin="round"><circle cx="5.9" cy="5.650" r="2.650"/><circle cx="5.9" cy="15" r="2.650"/><circle cx="5.9" cy="24.350" r="2.650"/></svg>
</main>
<div class="annotations">
<div class="b" style="left:604.25px;top:69.25px;width:269.54999999999995px;height:88.25px;border:5px solid #e83e20;"></div>
<svg class="b" style="left:0;top:0" width="2984" height="1348" viewBox="0 0 2984 1348"><line x1="1025.3" y1="174.5" x2="855.6" y2="138.6" stroke="#e83e20" stroke-width="5"/><polygon points="834.1,134.1 862.1,127.2 857.0,151.7" fill="#e83e20"/></svg>
<div class="b" style="left:2700px;top:189.25px;width:223px;height:82.75px;border:5px solid #e83e20;"></div>
<svg class="b" style="left:0;top:0" width="2984" height="1348" viewBox="0 0 2984 1348"><line x1="2969.5" y1="268" x2="2882.2" y2="254.0" stroke="#e83e20" stroke-width="5"/><polygon points="2860.5,250.5 2888.2,242.3 2884.2,267.0" fill="#e83e20"/></svg>
<div class="b" style="left:21px;top:1082.25px;width:354px;height:85.5px;border:5px solid #e83e20;"></div>
<svg class="b" style="left:0;top:0" width="2984" height="1348" viewBox="0 0 2984 1348"><line x1="485.5" y1="1125" x2="317.9" y2="1124.4" stroke="#e83e20" stroke-width="5"/><polygon points="297.6,1124.3 321.9,1112.1 321.9,1136.7" fill="#e83e20"/></svg>
</div>
</div>
</body>
</html>
